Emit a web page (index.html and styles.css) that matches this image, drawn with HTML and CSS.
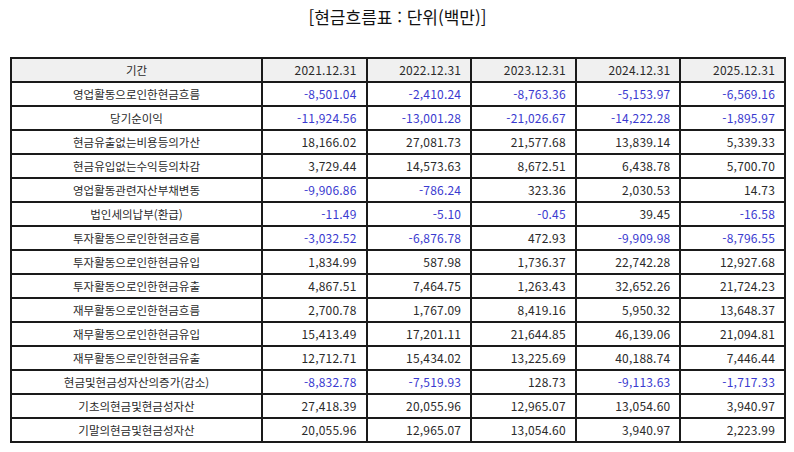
FILE: index.html
```html
<!DOCTYPE html>
<html lang="ko">
<head>
<meta charset="utf-8">
<link rel="stylesheet" href="styles.css">
</head>
<body>
<div class="page">
  <h1 class="title">[현금흐름표 : 단위(백만)]</h1>
  <table class="cf">
    <thead>
      <tr><th class="label">기간</th><th>2021.12.31</th><th>2022.12.31</th><th>2023.12.31</th><th>2024.12.31</th><th>2025.12.31</th></tr>
    </thead>
    <tbody>
      <tr><td class="label">영업활동으로인한현금흐름</td><td class="neg">-8,501.04</td><td class="neg">-2,410.24</td><td class="neg">-8,763.36</td><td class="neg">-5,153.97</td><td class="neg">-6,569.16</td></tr>
      <tr><td class="label">당기순이익</td><td class="neg">-11,924.56</td><td class="neg">-13,001.28</td><td class="neg">-21,026.67</td><td class="neg">-14,222.28</td><td class="neg">-1,895.97</td></tr>
      <tr><td class="label">현금유출없는비용등의가산</td><td>18,166.02</td><td>27,081.73</td><td>21,577.68</td><td>13,839.14</td><td>5,339.33</td></tr>
      <tr><td class="label">현금유입없는수익등의차감</td><td>3,729.44</td><td>14,573.63</td><td>8,672.51</td><td>6,438.78</td><td>5,700.70</td></tr>
      <tr><td class="label">영업활동관련자산부채변동</td><td class="neg">-9,906.86</td><td class="neg">-786.24</td><td>323.36</td><td>2,030.53</td><td>14.73</td></tr>
      <tr><td class="label">법인세의납부(환급)</td><td class="neg">-11.49</td><td class="neg">-5.10</td><td class="neg">-0.45</td><td>39.45</td><td class="neg">-16.58</td></tr>
      <tr><td class="label">투자활동으로인한현금흐름</td><td class="neg">-3,032.52</td><td class="neg">-6,876.78</td><td>472.93</td><td class="neg">-9,909.98</td><td class="neg">-8,796.55</td></tr>
      <tr><td class="label">투자활동으로인한현금유입</td><td>1,834.99</td><td>587.98</td><td>1,736.37</td><td>22,742.28</td><td>12,927.68</td></tr>
      <tr><td class="label">투자활동으로인한현금유출</td><td>4,867.51</td><td>7,464.75</td><td>1,263.43</td><td>32,652.26</td><td>21,724.23</td></tr>
      <tr><td class="label">재무활동으로인한현금흐름</td><td>2,700.78</td><td>1,767.09</td><td>8,419.16</td><td>5,950.32</td><td>13,648.37</td></tr>
      <tr><td class="label">재무활동으로인한현금유입</td><td>15,413.49</td><td>17,201.11</td><td>21,644.85</td><td>46,139.06</td><td>21,094.81</td></tr>
      <tr><td class="label">재무활동으로인한현금유출</td><td>12,712.71</td><td>15,434.02</td><td>13,225.69</td><td>40,188.74</td><td>7,446.44</td></tr>
      <tr><td class="label">현금및현금성자산의증가(감소)</td><td class="neg">-8,832.78</td><td class="neg">-7,519.93</td><td>128.73</td><td class="neg">-9,113.63</td><td class="neg">-1,717.33</td></tr>
      <tr><td class="label">기초의현금및현금성자산</td><td>27,418.39</td><td>20,055.96</td><td>12,965.07</td><td>13,054.60</td><td>3,940.97</td></tr>
      <tr><td class="label">기말의현금및현금성자산</td><td>20,055.96</td><td>12,965.07</td><td>13,054.60</td><td>3,940.97</td><td>2,223.99</td></tr>
    </tbody>
  </table>
</div>
</body>
</html>
```
FILE: styles.css
```css
html, body {
  margin: 0;
  padding: 0;
  background: #ffffff;
}
body {
  font-family: "Noto Sans CJK KR", "Noto Sans", sans-serif;
  color: #2a2a2a;
}
.page {
  padding: 0 9px 0 10px;
}
.title {
  margin: 0;
  height: 57px;
  padding-top: 5px;
  box-sizing: border-box;
  text-align: center;
  font-size: 17px;
  font-weight: 400;
  line-height: 24px;
  color: #111111;
}
.cf {
  width: 776px;
  border-collapse: collapse;
  table-layout: fixed;
  font-size: 12px;
}
.cf th, .cf td {
  border: 2px solid #1a1a1a;
  height: 24px;
  padding: 0 9px 0 4px;
  text-align: right;
  font-weight: 400;
  line-height: 14px;
  box-sizing: border-box;
  letter-spacing: 0.2px;
}
.cf thead th {
  background: #f0f0f0;
}
.cf th.label, .cf td.label {
  width: 251px;
  text-align: center;
  padding: 0;
  font-size: 11.5px;
  letter-spacing: 0;
}
.cf .neg {
  color: #3a3ad0;
}
```
